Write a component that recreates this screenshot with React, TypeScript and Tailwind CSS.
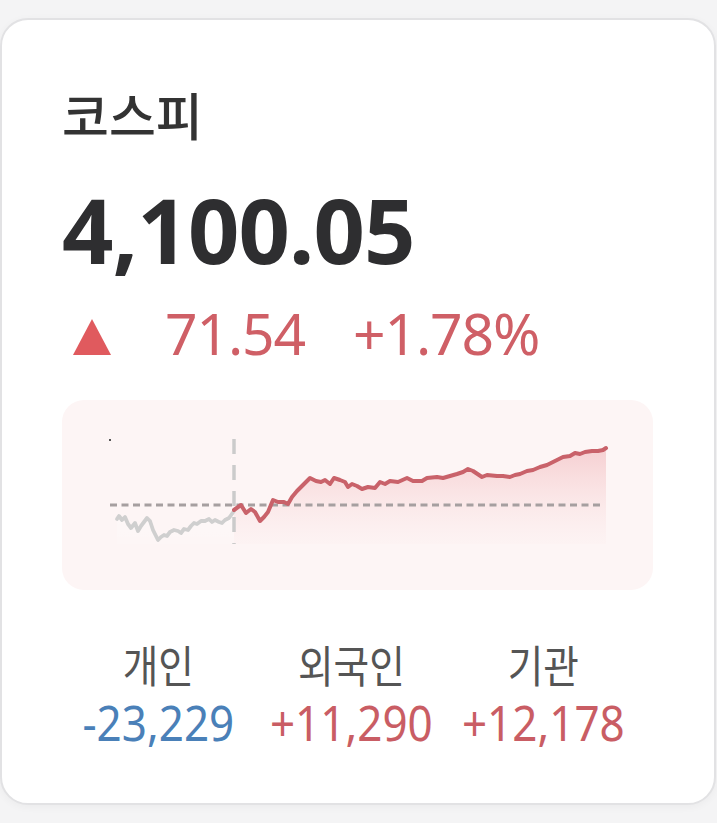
import React from "react";

const grayPts: [number, number][] = [
  [117, 521], [119, 518], [122, 522], [125, 519], [128, 526], [131, 530], [135, 525],
  [138, 533], [141, 528], [144, 524], [147, 520], [150, 523], [153, 532], [156, 538],
  [158, 542], [161, 539], [164, 537], [167, 538], [170, 534], [174, 532], [178, 533],
  [181, 535], [184, 531], [188, 532], [191, 528], [194, 525], [197, 526], [201, 523],
  [205, 523], [209, 521], [212, 524], [215, 522], [219, 524], [222, 525], [225, 522],
  [229, 520], [234, 513],
];

const redPts: [number, number][] = [
  [234, 512], [241, 507], [246, 515], [251, 511], [255, 514], [260, 523], [264, 519],
  [268, 514], [273, 502], [278, 504], [284, 504], [288, 506], [292, 499], [297, 493],
  [303, 487], [310, 480], [316, 483], [321, 484], [325, 482], [330, 486], [334, 480],
  [340, 482], [345, 484], [348, 489], [352, 486], [357, 488], [362, 491], [368, 489],
  [375, 490], [380, 484], [385, 486], [390, 483], [398, 484], [407, 480], [413, 483],
  [422, 483], [427, 480], [437, 479], [443, 480], [450, 478], [457, 476], [463, 474],
  [468, 471], [473, 473], [482, 479], [487, 477], [497, 478], [503, 478], [510, 479],
  [515, 477], [520, 476], [527, 473], [533, 472], [540, 469], [547, 467], [557, 462],
  [563, 459], [570, 458], [575, 455], [580, 456], [585, 454], [592, 453], [598, 453],
  [603, 452], [606, 450],
];

const toLine = (pts: [number, number][]) =>
  pts.map(([x, y], i) => `${i === 0 ? "M" : "L"}${x},${y}`).join(" ");

const KospiChart = () => {
  const redLine = toLine(redPts);
  const grayLine = toLine(grayPts);
  return (
    <svg width="591" height="190" viewBox="62 402 591 190" className="block">
      <defs>
        <linearGradient id="redFill" x1="0" y1="450" x2="0" y2="546" gradientUnits="userSpaceOnUse">
          <stop offset="0" stopColor="#ea9196" stopOpacity="0.38" />
          <stop offset="1" stopColor="#f6c4c6" stopOpacity="0.04" />
        </linearGradient>
        <linearGradient id="grayFill" x1="0" y1="513" x2="0" y2="546" gradientUnits="userSpaceOnUse">
          <stop offset="0" stopColor="#ffffff" stopOpacity="0.35" />
          <stop offset="1" stopColor="#ffffff" stopOpacity="0.1" />
        </linearGradient>
      </defs>
      <path d={`${grayLine} L234,546 L117,546 Z`} fill="url(#grayFill)" />
      <path d={`${redLine} L606,546 L234,546 Z`} fill="url(#redFill)" />
      <line x1="110" y1="507" x2="600" y2="507" stroke="#a69fa0" strokeWidth="3.2" strokeDasharray="7 4.5" />
      <line x1="234" y1="441" x2="234" y2="546" stroke="#cbcbcb" strokeWidth="3.5" strokeDasharray="15 11" />
      <rect x="109" y="441" width="2" height="2" fill="#555" />
      <path d={grayLine} fill="none" stroke="#cfcfcf" strokeWidth="3.8" strokeLinejoin="round" strokeLinecap="round" />
      <path d={redLine} fill="none" stroke="#c9626a" strokeWidth="4" strokeLinejoin="round" strokeLinecap="round" />
    </svg>
  );
};

const investors = [
  { label: "개인", value: "-23,229", color: "text-[#4a80b8]" },
  { label: "외국인", value: "+11,290", color: "text-[#c95d64]" },
  { label: "기관", value: "+12,178", color: "text-[#c95d64]" },
];

export default function App() {
  return (
    <div
      className="h-[823px] w-[717px] overflow-hidden bg-[#f4f4f5] pt-[18px]"
      style={{ fontFamily: '"Noto Sans", "Noto Sans CJK KR", sans-serif' }}
    >
      <div className="flex h-[787px] w-[716px] flex-col rounded-[28px] border-2 border-[#e2e2e4] bg-white pl-[60px] shadow-[0_2px_8px_rgba(0,0,0,0.04)]">
        <h2
          className="mt-[69px] text-[51px] font-medium leading-none text-[#333333]"
          style={{ fontFamily: '"Noto Sans CJK KR", sans-serif' }}
        >
          코스피
        </h2>

        <div className="mt-[44px] text-[90px] font-bold leading-none tracking-[-0.01em] text-[#2e2e30]">
          4,100.05
        </div>

        <div className="mt-[31px] flex items-center text-[57px] leading-none tracking-[-0.02em] text-[#cf5f66]">
          <svg width="40" height="36" viewBox="0 0 40 36" className="ml-[10px] mt-[6px] shrink-0">
            <polygon points="20,0 39,36 1,36" fill="#e05a5e" />
          </svg>
          <span className="ml-[53px]">71.54</span>
          <span className="ml-[48px]">+1.78%</span>
        </div>

        <div className="mt-[38px] h-[190px] w-[591px] overflow-hidden rounded-[22px] bg-[#fdf5f5]">
          <KospiChart />
        </div>

        <div className="mt-[54px] grid w-[578px] grid-cols-3">
          {investors.map((it) => (
            <div key={it.label} className="flex scale-x-[0.88] flex-col items-center">
              <span
                className="h-[44px] text-[44px] leading-[40px] text-[#555555]"
                style={{ fontFamily: '"Noto Sans CJK KR", sans-serif' }}
              >
                {it.label}
              </span>
              <span className={`mt-[9px] text-[50px] leading-none ${it.color}`}>{it.value}</span>
            </div>
          ))}
        </div>
      </div>
    </div>
  );
}
